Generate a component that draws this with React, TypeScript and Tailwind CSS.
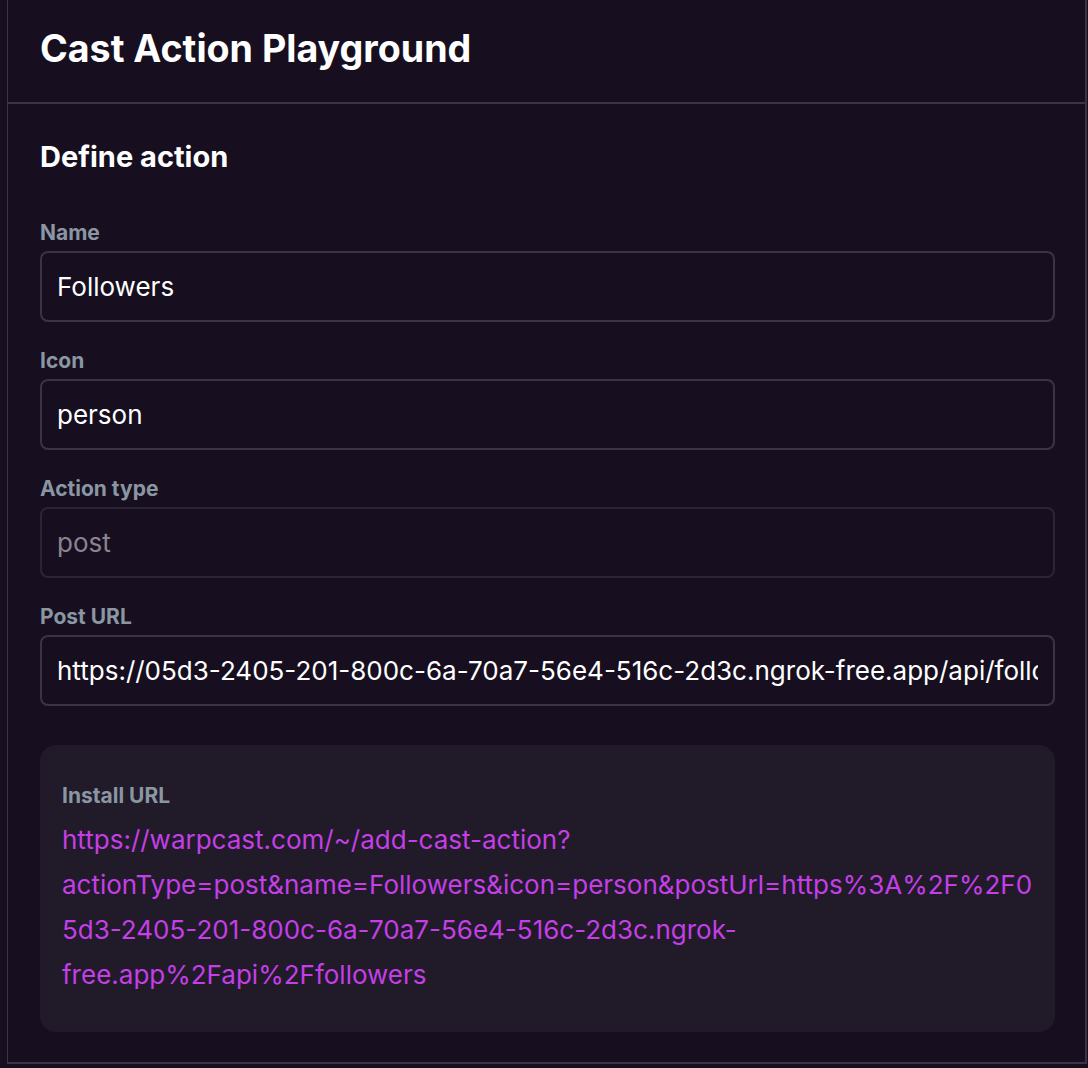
export default function App() {
  const installUrl =
    'https://warpcast.com/~/add-cast-action?actionType=post&name=Followers&icon=person&postUrl=https%3A%2F%2F05d3-2405-201-800c-6a-70a7-56e4-516c-2d3c.ngrok-free.app%2Fapi%2Ffollowers';

  const fields = [
    { label: 'Name', value: 'Followers', disabled: false },
    { label: 'Icon', value: 'person', disabled: false },
    { label: 'Action type', value: 'post', disabled: true },
    {
      label: 'Post URL',
      value: 'https://05d3-2405-201-800c-6a-70a7-56e4-516c-2d3c.ngrok-free.app/api/followers',
      disabled: false,
    },
  ];

  return (
    <div className="min-h-screen bg-[#170f1f] font-['Inter',sans-serif] text-white">
      <div className="ml-[7px] mr-[1px] border-l border-r-2 border-b-2 border-[#3d3347]">
        {/* Header */}
        <div className="h-[104px] border-b-2 border-[#3d3347] px-[32px] flex items-center">
          <h1 className="text-[37.6px] leading-none font-bold pb-[4px]">Cast Action Playground</h1>
        </div>

        {/* Form */}
        <div className="pl-[32px] pr-[30px] pt-[35px] pb-[30px]">
          <h2 className="text-[29px] leading-[36px] font-bold mb-[44px]">Define action</h2>

          <div className="flex flex-col gap-[25px]">
            {fields.map((f) => (
              <div key={f.label} className="flex flex-col">
                <label className="text-[21px] leading-[28px] font-bold text-[#8b96a3] mb-[4px]">{f.label}</label>
                <input
                  readOnly
                  value={f.value}
                  disabled={f.disabled}
                  className={`h-[71px] w-full rounded-[8px] border-2 bg-transparent px-[15px] text-[26px] outline-none ${
                    f.disabled ? 'border-[#2c2535] text-[#8a8490]' : 'border-[#3d3347] text-white'
                  }`}
                />
              </div>
            ))}
          </div>

          {/* Install URL */}
          <div className="mt-[39px] rounded-[16px] bg-[#201a29] px-[22px] pt-[37px] pb-[35px]">
            <div className="text-[21px] leading-[28px] font-bold text-[#8b96a3] mb-[7px]">Install URL</div>
            <div className="text-[26px] leading-[45px] text-[#c43fe6] break-words">{installUrl}</div>
          </div>
        </div>
      </div>
    </div>
  );
}
